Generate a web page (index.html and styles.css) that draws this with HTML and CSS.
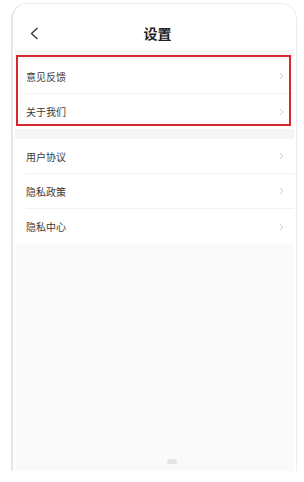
FILE: index.html
```html
<!DOCTYPE html>
<html lang="zh-CN">
  <head>
    <meta charset="UTF-8" />
    <title>设置</title>
    <link rel="stylesheet" href="styles.css">
  </head>
  <body>
    <div class="phone">
      <div class="screen">
        <div class="header">
          <svg class="back" width="9" height="13" viewBox="0 0 9 13">
            <polyline points="7.5,1 1.5,6.5 7.5,12" fill="none" stroke="#333" stroke-width="1.3" />
          </svg>
          <div class="title">设置</div>
        </div>

        <div class="group first">
          <div class="row">
            <span>意见反馈</span>
            <svg class="arrow" width="5" height="8" viewBox="0 0 5 8"><polyline points="1,1 4,4 1,7" fill="none" stroke="#c9c9c9" stroke-width="0.9" /></svg>
          </div>
          <div class="row">
            <span>关于我们</span>
            <svg class="arrow" width="5" height="8" viewBox="0 0 5 8"><polyline points="1,1 4,4 1,7" fill="none" stroke="#c9c9c9" stroke-width="0.9" /></svg>
          </div>
        </div>

        <div class="group">
          <div class="row">
            <span>用户协议</span>
            <svg class="arrow" width="5" height="8" viewBox="0 0 5 8"><polyline points="1,1 4,4 1,7" fill="none" stroke="#c9c9c9" stroke-width="0.9" /></svg>
          </div>
          <div class="row">
            <span>隐私政策</span>
            <svg class="arrow" width="5" height="8" viewBox="0 0 5 8"><polyline points="1,1 4,4 1,7" fill="none" stroke="#c9c9c9" stroke-width="0.9" /></svg>
          </div>
          <div class="row">
            <span>隐私中心</span>
            <svg class="arrow" width="5" height="8" viewBox="0 0 5 8"><polyline points="1,1 4,4 1,7" fill="none" stroke="#c9c9c9" stroke-width="0.9" /></svg>
          </div>
        </div>

        <div class="home-bar"></div>
      </div>
    </div>

    <!-- highlight box round the first group -->
    <div class="highlight"></div>
  </body>
</html>
```

FILE: styles.css
```css
body {
  margin: 0;
  background-color: #fff;
  font-family: "Noto Sans CJK SC", "Noto Sans", sans-serif;
}
.phone {
  box-sizing: border-box;
  width: 286px;
  height: 468px;
  margin: 3px 0 0 11px;
  border: 1px solid #ececec;
  border-left: 2px solid #e6e6e6;
  border-bottom: none;
  border-radius: 16px 16px 0 0;
  background-color: #fff;
  padding: 0 2px 0 2px;
  overflow: hidden;
}
.screen {
  display: flex;
  flex-direction: column;
  height: 100%;
  background-color: #fafafa;
}
.header {
  position: relative;
  height: 46px;
  flex-shrink: 0;
  display: flex;
  align-items: center;
  justify-content: center;
  background-color: #fff;
}
.back {
  position: absolute;
  left: 15px;
  top: 23px;
}
.title {
  font-size: 14px;
  font-weight: bold;
  color: #222;
  margin-left: 6px;
  margin-top: 12px;
}
.group {
  background-color: #fff;
  border-top: 10px solid #f5f5f5;
}
.group.first {
  border-top-width: 9px;
}
.row {
  height: 35px;
  margin-left: 11px;
  padding-right: 10px;
  display: flex;
  align-items: center;
  justify-content: space-between;
  font-size: 10px;
  color: #3a3a3a;
  border-bottom: 1px solid #f2f2f2;
  box-sizing: border-box;
}
.row:last-child {
  border-bottom: none;
}
.arrow {
  display: block;
}
.home-bar {
  width: 10px;
  height: 5px;
  border-radius: 3px;
  background-color: #e4e4e4;
  margin: auto auto 7px 152px;
}
.highlight {
  position: absolute;
  left: 16px;
  top: 55px;
  width: 275px;
  height: 71px;
  box-sizing: border-box;
  border: 2px solid #d8262f;
}
```
